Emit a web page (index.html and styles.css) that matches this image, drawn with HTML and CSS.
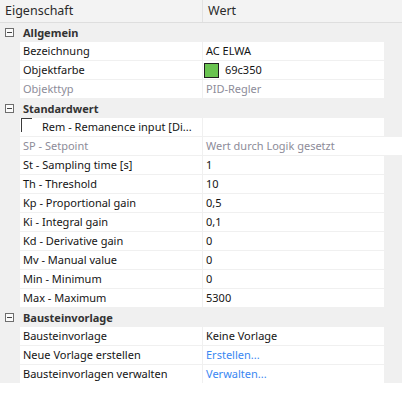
FILE: index.html
```html
<!DOCTYPE html>
<html lang="de">
<head>
<meta charset="utf-8">
<title>Eigenschaften</title>
<link rel="stylesheet" href="styles.css">
</head>
<body>
<div class="grid">
  <div class="header">
    <div class="hname">Eigenschaft</div>
    <div class="hval">Wert</div>
  </div>

  <div class="cat"><span class="toggle"></span><span class="cat-label">Allgemein</span></div>
  <div class="row"><div class="name">Bezeichnung</div><div class="val">AC ELWA</div></div>
  <div class="row"><div class="name">Objektfarbe</div><div class="val"><span class="swatch"></span><span class="swatch-text">69c350</span></div></div>
  <div class="row"><div class="name dim">Objekttyp</div><div class="val dim">PID-Regler</div></div>

  <div class="cat"><span class="toggle"></span><span class="cat-label">Standardwert</span></div>
  <div class="row"><div class="name check-name"><span class="check"></span><span>Rem - Remanence input [Di...</span></div><div class="val"></div></div>
  <div class="row"><div class="name dim">SP - Setpoint</div><div class="val dim wide">Wert durch Logik gesetzt</div></div>
  <div class="row"><div class="name">St - Sampling time [s]</div><div class="val">1</div></div>
  <div class="row"><div class="name">Th - Threshold</div><div class="val">10</div></div>
  <div class="row"><div class="name">Kp - Proportional gain</div><div class="val">0,5</div></div>
  <div class="row"><div class="name">Ki - Integral gain</div><div class="val">0,1</div></div>
  <div class="row"><div class="name">Kd - Derivative gain</div><div class="val">0</div></div>
  <div class="row"><div class="name">Mv - Manual value</div><div class="val">0</div></div>
  <div class="row"><div class="name">Min - Minimum</div><div class="val">0</div></div>
  <div class="row"><div class="name">Max - Maximum</div><div class="val">5300</div></div>

  <div class="cat"><span class="toggle"></span><span class="cat-label">Bausteinvorlage</span></div>
  <div class="row"><div class="name">Bausteinvorlage</div><div class="val">Keine Vorlage</div></div>
  <div class="row"><div class="name">Neue Vorlage erstellen</div><div class="val link">Erstellen...</div></div>
  <div class="row"><div class="name">Bausteinvorlagen verwalten</div><div class="val link">Verwalten...</div></div>
</div>
</body>
</html>
```

FILE: styles.css
```css
html, body {
  margin: 0;
  padding: 0;
  background: #ffffff;
}

body {
  font-family: "Noto Sans", "Open Sans", sans-serif;
  font-size: 11px;
  color: #141414;
}

.grid {
  width: 402px;
  background: #f0f0f0;
  display: flex;
  flex-direction: column;
  gap: 1px;
}

.header {
  display: flex;
  height: 22px;
  background: #f3f3f3;
  border-bottom: 1px solid #dedede;
  margin-bottom: -1px;
  font-size: 12.5px;
  color: #2a2a2a;
}

.hname {
  width: 197px;
  padding-left: 5px;
  line-height: 22px;
  border-right: 1px solid #e2e2e2;
}

.hval {
  padding-left: 5px;
  line-height: 22px;
}

.cat {
  display: flex;
  align-items: center;
  height: 18px;
  background: #f0f0f0;
}

.toggle {
  position: relative;
  box-sizing: border-box;
  width: 9px;
  height: 9px;
  margin-left: 5px;
  border: 1px solid #6e6e6e;
  background: #fbfbfb;
}

.toggle::after {
  content: "";
  position: absolute;
  left: 1px;
  top: 3px;
  width: 5px;
  height: 1px;
  background: #444;
}

.cat-label {
  margin-left: 9px;
  font-weight: 700;
  color: #333333;
}

.row {
  display: flex;
  height: 18px;
  padding-left: 20px;
  gap: 1px;
}

.name,
.val {
  background: #ffffff;
  line-height: 18px;
  white-space: nowrap;
  overflow: hidden;
}

.name {
  width: 179px;
  padding-left: 3px;
}

.val {
  width: 178px;
  padding-left: 3px;
}

.val.wide {
  width: 196px;
}

.dim {
  color: #8d8c99;
}

.link {
  color: #3a87f2;
}

.check-name {
  display: flex;
  align-items: center;
  padding-left: 1px;
  width: 181px;
}

.check {
  box-sizing: border-box;
  width: 11px;
  height: 14px;
  border-top: 1px solid #3a3a3a;
  border-left: 1px solid #3a3a3a;
  margin-right: 10px;
  align-self: flex-start;
}

.val .swatch {
  display: inline-block;
  box-sizing: border-box;
  width: 15px;
  height: 15px;
  border: 1px solid #1f1f1f;
  background: #69c350;
  vertical-align: middle;
  margin-top: -2px;
}

.swatch-text {
  margin-left: 6px;
}

.row .val:has(.swatch) {
  padding-left: 1px;
  width: 180px;
}
```
